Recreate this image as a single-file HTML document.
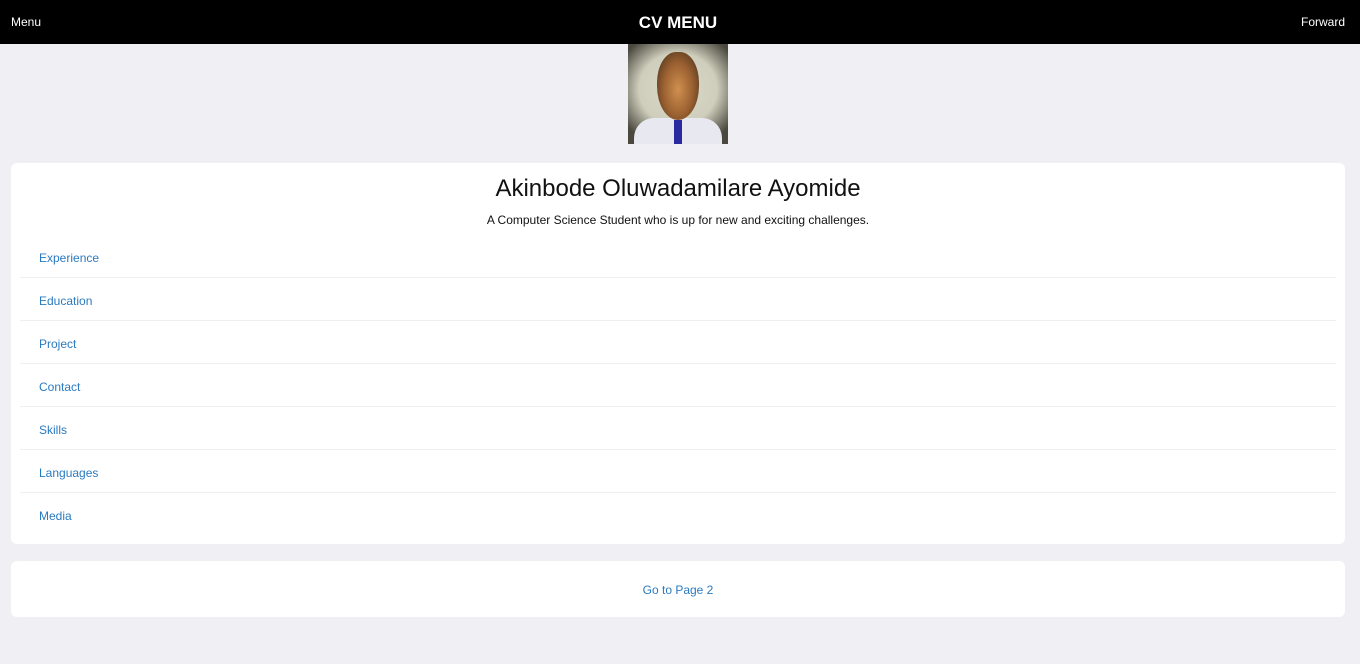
<!DOCTYPE html>
<html><head><style>
*{margin:0;padding:0;box-sizing:border-box}
body{width:1360px;height:664px;background:#efeff4;font-family:"Liberation Sans",sans-serif;position:relative;overflow:hidden}
.nav{position:absolute;left:0;top:0;width:1360px;height:44px;background:#000;color:#fff}
.nav .l{position:absolute;left:11px;top:15px;font-size:12px}
.nav .r{position:absolute;right:15px;top:15px;font-size:12px}
.nav .t{position:absolute;left:0;width:1356px;text-align:center;top:13px;font-size:17px;font-weight:bold}
.photo{position:absolute;left:628px;top:44px;width:100px;height:100px;background:radial-gradient(ellipse 65% 60% at 50% 45%,#dcdccc 0%,#cfcdbb 60%,#4a483e 100%);overflow:hidden}
.face{position:absolute;left:29px;top:8px;width:42px;height:68px;border-radius:45% 45% 50% 50%;background:radial-gradient(ellipse at 50% 55%,#d09050 0%,#9a6030 50%,#3a2a1a 100%)}
.shirt{position:absolute;left:6px;top:74px;width:88px;height:34px;background:#e8e8f0;border-radius:20px 20px 0 0}
.tie{position:absolute;left:46px;top:76px;width:8px;height:26px;background:#2a2aa0}
.card{position:absolute;left:11px;width:1334px;background:#fff;border-radius:6px}
h1{position:absolute;left:0;width:1334px;top:12px;text-align:center;font-weight:normal;font-size:24px;color:#111}
.sub{position:absolute;left:0;width:1334px;top:50px;text-align:center;font-size:12px;color:#111}
.list{position:absolute;left:9px;top:72px;width:1316px}
.item{height:43px;border-bottom:1px solid #efeff2;font-size:12px;color:#2a7ac0;padding:16px 0 0 19px}
.item:last-child{border-bottom:none}
.go{text-align:center;font-size:12px;color:#2a7ac0;padding-top:22px}
</style></head><body>
<div class="nav"><span class="l">Menu</span><span class="t">CV MENU</span><span class="r">Forward</span></div>
<div class="photo"><div class="shirt"></div><div class="face"></div><div class="tie"></div></div>
<div class="card" style="top:163px;height:381px">
<h1>Akinbode Oluwadamilare Ayomide</h1>
<div class="sub">A Computer Science Student who is up for new and exciting challenges.</div>
<div class="list">
<div class="item">Experience</div>
<div class="item">Education</div>
<div class="item">Project</div>
<div class="item">Contact</div>
<div class="item">Skills</div>
<div class="item">Languages</div>
<div class="item">Media</div>
</div></div>
<div class="card" style="top:561px;height:56px"><div class="go">Go to Page 2</div></div>
</body></html>
